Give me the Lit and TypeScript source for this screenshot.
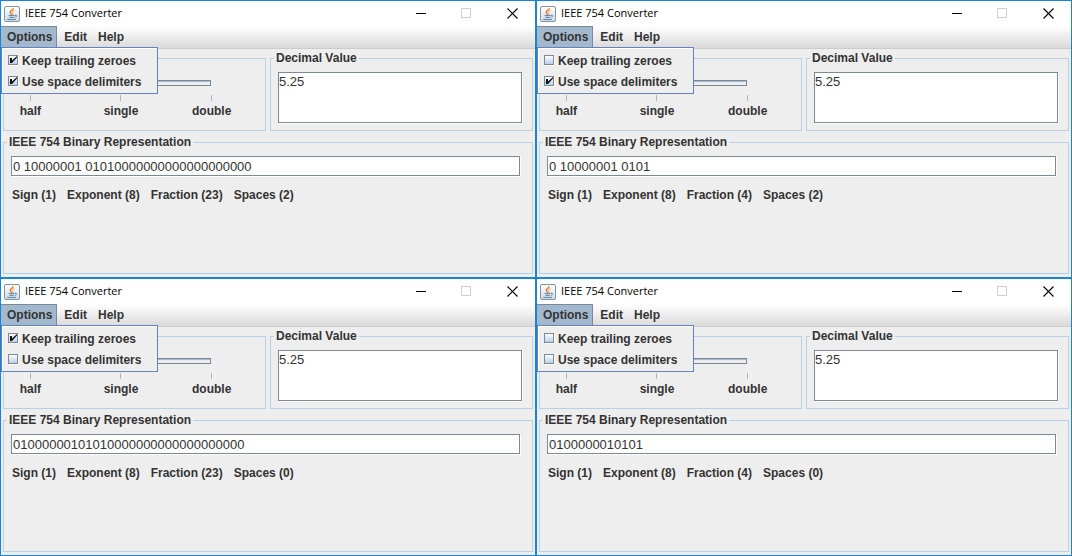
import { LitElement, html, css, svg } from "lit";
import { customElement, property } from "lit/decorators.js";

interface Conversion {
  keepZeroes: boolean;
  useSpaces: boolean;
  bits: string;
  fraction: number;
  spaces: number;
}

const conversions: Conversion[] = [
  { keepZeroes: true, useSpaces: true, bits: "0 10000001 01010000000000000000000", fraction: 23, spaces: 2 },
  { keepZeroes: false, useSpaces: true, bits: "0 10000001 0101", fraction: 4, spaces: 2 },
  { keepZeroes: true, useSpaces: false, bits: "01000000101010000000000000000000", fraction: 23, spaces: 0 },
  { keepZeroes: false, useSpaces: false, bits: "0100000010101", fraction: 4, spaces: 0 },
];

const javaIcon = svg`
  <defs>
    <linearGradient id="tile" x1="0" y1="0" x2="0" y2="1">
      <stop offset="0" stop-color="#ffffff"/><stop offset="1" stop-color="#cfdbe4"/>
    </linearGradient>
  </defs>
  <rect x="0.5" y="0.5" width="15" height="15" rx="1.5" fill="url(#tile)" stroke="#7f95a3"/>
  <path d="M9.2 2C9.8 4 6 4.6 6.2 6.4C6.3 7.4 7.3 7.8 7.5 8.8" fill="none" stroke="#e8761c" stroke-width="1.3"/>
  <path d="M10.4 4.6C8.6 5.4 8 6.2 8.8 7.2C9.1 7.7 9 8.2 8.6 8.6" fill="none" stroke="#f0944a"/>
  <path d="M4.6 9.6H10.6M5.4 11.4H9.8M3.2 13.4H11.8" fill="none" stroke="#5382a6"/>
  <path d="M10.8 9.2C13.4 8.6 13 11 10.8 11.4" fill="none" stroke="#5382a6"/>`;

@customElement("converter-window")
export class ConverterWindow extends LitElement {
  @property({ attribute: false }) data!: Conversion;

  static styles = css`
    :host {
      display: flex;
      flex-direction: column;
      border: 1px solid #1883d7;
      background: #eee;
      color: #333;
      font: bold 12px/16px "Liberation Sans", Arial, sans-serif;
      min-width: 0;
    }
    * { box-sizing: border-box; }
    button { font: inherit; color: inherit; border: 0; background: none; padding: 0; margin: 0; }
    .titlebar {
      display: flex;
      align-items: center;
      height: 25px;
      background: #fff;
      padding-left: 3px;
      color: #000;
    }
    .logo { width: 16px; height: 16px; flex: none; }
    .title {
      flex: 1;
      margin: 0;
      padding: 0 0 2px 5px;
      font: 11px/16px "Open Sans", "Segoe UI", sans-serif;
    }
    .caption { width: 46px; height: 24px; display: grid; place-items: center; }
    .caption svg { width: 11px; height: 11px; display: block; }
    .menubar {
      position: relative;
      display: flex;
      height: 23px;
      padding-bottom: 1px;
      border-bottom: 1px solid #ccc;
      background: linear-gradient(#fff, #dadada);
    }
    .menu { padding: 0 5px 0 6px; height: 21px; }
    .menu.open {
      background: #a3b8cc;
      border: solid #7a8a99;
      border-width: 1px 1px 0 0;
      padding: 0 4px 0 6px;
      margin-right: 1px;
    }
    .popup {
      position: absolute;
      z-index: 1;
      left: 0;
      top: 21px;
      display: flex;
      flex-direction: column;
      padding: 2px 16px 1px 6px;
      border: 1px solid #6382bf;
      background: #eee;
      box-shadow: inset 1px 1px #fff;
    }
    .option {
      display: flex;
      align-items: center;
      gap: 4px;
      height: 21px;
      white-space: nowrap;
    }
    .tick {
      appearance: none;
      width: 10px;
      height: 10px;
      margin: 0 0 2px;
      border: 1px solid #7a8a99;
      background: linear-gradient(#fff, #b8cfe5);
      box-shadow: 1px 1px #fff;
    }
    .tick:checked {
      background: url("data:image/svg+xml,%3Csvg xmlns='http://www.w3.org/2000/svg' viewBox='0 0 8 8'%3E%3Cpath d='M1 2h2v2.5L8 0v1.6L3 7H1z' fill='%23111'/%3E%3C/svg%3E") center / 8px 8px no-repeat, linear-gradient(#fff, #b8cfe5);
    }
    .body {
      flex: 1;
      display: grid;
      grid-template-columns: 1fr 1fr;
      grid-template-rows: auto 1fr;
      gap: 3px 4px;
      padding: 1px 2px 3px;
    }
    .group {
      min-width: 0;
      margin: 0;
      border: 1px solid #b8cfe5;
    }
    .precision { margin-top: 8px; padding: 21px 54px 0 19px; }
    .track {
      display: block;
      appearance: none;
      width: 100%;
      height: 6px;
      margin: 0;
      border: 1px solid #7a8a99;
      background: #eee;
      box-shadow: inset 0 1px #a3b8cc;
    }
    .track::-webkit-slider-thumb { appearance: none; width: 0; }
    .value { padding: 0 10px 7px 7px; }
    .binary { grid-column: 1 / -1; padding: 0 12px 0 7px; }
    legend { height: 16px; padding: 0 2px; margin-left: -4px; }
    .field {
      display: block;
      width: 100%;
      margin: 0;
      border: 1px solid #7a8a99;
      border-radius: 0;
      background: #fff;
      color: #333;
      font: 13px/15px "Liberation Sans", Arial, sans-serif;
      outline: 0;
      resize: none;
      box-shadow: 1px 1px #fff;
    }
    .decimal { height: 51px; margin-top: 6px; padding: 1px 0; }
    .bits { height: 20px; margin-top: 6px; padding: 1px; }
    .scale { display: grid; grid-template-columns: repeat(3, 1fr); margin: 9px -46px 0 -38px; text-align: center; }
    .mark::before { content: ""; display: block; width: 1px; height: 6px; margin: 0 auto 2px; background: #a3b8cc; }
    .legend { display: flex; gap: 11px; margin: 0; padding: 11px 1px 0; }
  `;

  render() {
    const d = this.data;
    return html`
      <header class="titlebar">
        <svg class="logo" viewBox="0 0 16 16" aria-hidden="true">${javaIcon}</svg>
        <h1 class="title">IEEE 754 Converter</h1>
        <button class="caption" aria-label="Minimize"><svg viewBox="0 0 11 11"><path d="M1 5.5H11" stroke="#000"/></svg></button>
        <button class="caption" aria-label="Maximize" disabled><svg viewBox="0 0 11 11"><path d="M.5.5H9.5V9.5H.5Z" fill="none" stroke="#ccc"/></svg></button>
        <button class="caption" aria-label="Close"><svg viewBox="0 0 11 11"><path d="M.5.5L10.5 10.5M10.5.5L.5 10.5" stroke="#000" stroke-width="1.1"/></svg></button>
      </header>
      <nav class="menubar">
        <button class="menu open" aria-expanded="true">Options</button>
        <button class="menu">Edit</button>
        <button class="menu">Help</button>
        <div class="popup">
          <label class="option"><input class="tick" type="checkbox" .checked=${d.keepZeroes}>Keep trailing zeroes</label>
          <label class="option"><input class="tick" type="checkbox" .checked=${d.useSpaces}>Use space delimiters</label>
        </div>
      </nav>
      <main class="body">
        <section class="group precision">
          <input class="track" type="range" min="0" max="2" value="1" aria-label="Precision">
          <div class="scale"><span class="mark">half</span><span class="mark">single</span><span class="mark">double</span></div>
        </section>
        <fieldset class="group value">
          <legend><label for="decimal">Decimal Value</label></legend>
          <textarea class="field decimal" id="decimal" .value=${"5.25"}></textarea>
        </fieldset>
        <fieldset class="group binary">
          <legend><label for="bits">IEEE 754 Binary Representation</label></legend>
          <input class="field bits" id="bits" .value=${d.bits}>
          <p class="legend">
            <span>Sign (1)</span><span>Exponent (8)</span><span>Fraction (${d.fraction})</span><span>Spaces (${d.spaces})</span>
          </p>
        </fieldset>
      </main>`;
  }
}

@customElement("app-root")
export class AppRoot extends LitElement {
  static styles = css`
    :host {
      display: grid;
      grid-template-columns: 1fr 1fr;
      grid-auto-rows: minmax(278px, 50vh);
    }
  `;

  render() {
    return conversions.map((c) => html`<converter-window .data=${c}></converter-window>`);
  }
}
